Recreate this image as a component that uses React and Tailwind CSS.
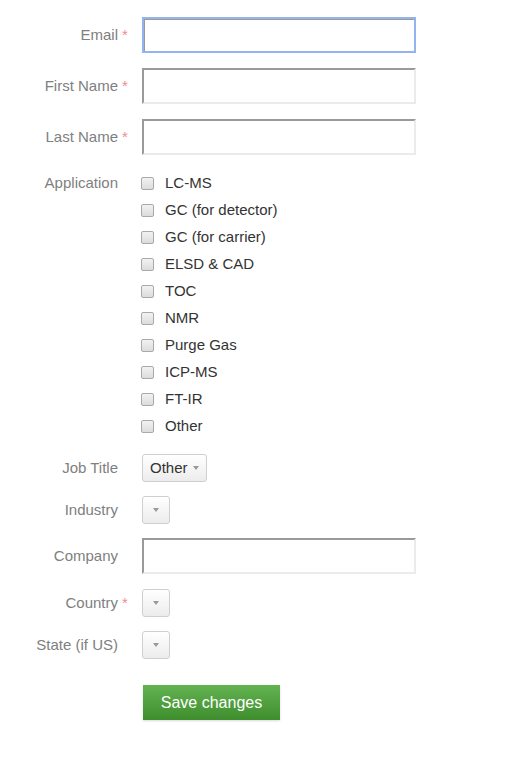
import React from 'react';

const applications = [
  'LC-MS',
  'GC (for detector)',
  'GC (for carrier)',
  'ELSD & CAD',
  'TOC',
  'NMR',
  'Purge Gas',
  'ICP-MS',
  'FT-IR',
  'Other',
];

function Label({ text, required }) {
  return (
    <div className="w-[118px] shrink-0 text-right text-[15px] text-[#808080]">
      <span className="relative">
        {text}
        {required && <span className="absolute left-full ml-[4px] text-[#f08c8c]">*</span>}
      </span>
    </div>
  );
}

function TextInput({ focused }) {
  return (
    <input
      type="text"
      className={
        focused
          ? 'h-[36px] w-[274px] border-2 border-[#93b4ee] bg-white shadow-[inset_1px_1px_0_#9a9a9a] outline-none'
          : 'h-[36px] w-[274px] border-2 border-t-[#9a9a9a] border-l-[#9a9a9a] border-r-[#ebebeb] border-b-[#ebebeb] bg-white outline-none'
      }
    />
  );
}

function Caret() {
  return <span className="inline-block h-0 w-0 border-x-[3.5px] border-t-[4px] border-x-transparent border-t-[#999]" />;
}

function Select({ value }) {
  return (
    <div
      className={
        value
          ? 'flex h-[28px] items-center gap-[5px] rounded-[3px] border border-[#cfcfcf] bg-gradient-to-b from-white to-[#ececec] px-[7px] text-[15px] text-[#333]'
          : 'flex h-[28px] items-center rounded-[3px] border border-[#cfcfcf] bg-gradient-to-b from-white to-[#ececec] px-[10px]'
      }
    >
      {value && <span>{value}</span>}
      <Caret />
    </div>
  );
}

function Row({ label, required, children, className = '' }) {
  return (
    <div className={'flex items-center gap-[24px] ' + className}>
      <Label text={label} required={required} />
      {children}
    </div>
  );
}

export default function App() {
  return (
    <div className="min-h-[758px] w-[512px] bg-white pt-[17px]" style={{ fontFamily: '"Liberation Sans", Arial, sans-serif' }}>
      <Row label="Email" required>
        <TextInput focused />
      </Row>
      <Row label="First Name" required className="mt-[15px]">
        <TextInput />
      </Row>
      <Row label="Last Name" required className="mt-[15px]">
        <TextInput />
      </Row>

      {/* Application checkboxes */}
      <div className="mt-[15px] flex gap-[23px]">
        <div className="flex h-[27px] w-[118px] shrink-0 items-center justify-end text-[15px] text-[#808080]">Application</div>
        <div className="flex flex-col">
          {applications.map((app) => (
            <label key={app} className="flex h-[27px] items-center gap-[11px] text-[15px] text-[#333]">
              <span className="h-[13px] w-[13px] rounded-[2px] border border-[#a9a9a9] bg-gradient-to-b from-[#f2f2f2] to-[#dcdcdc]" />
              {app}
            </label>
          ))}
        </div>
      </div>

      <Row label="Job Title" className="mt-[14px]">
        <Select value="Other" />
      </Row>
      <Row label="Industry" className="mt-[14px]">
        <Select />
      </Row>
      <Row label="Company" className="mt-[14px]">
        <TextInput />
      </Row>
      <Row label="Country" required className="mt-[15px]">
        <Select />
      </Row>
      <Row label="State (if US)" className="mt-[14px]">
        <Select />
      </Row>

      <div className="mt-[26px] pl-[143px]">
        <button className="h-[35px] w-[137px] bg-gradient-to-b from-[#64b351] to-[#3e8e2e] text-[16px] text-white shadow-[0_1px_2px_rgba(0,0,0,0.15)]">
          Save changes
        </button>
      </div>
    </div>
  );
}
